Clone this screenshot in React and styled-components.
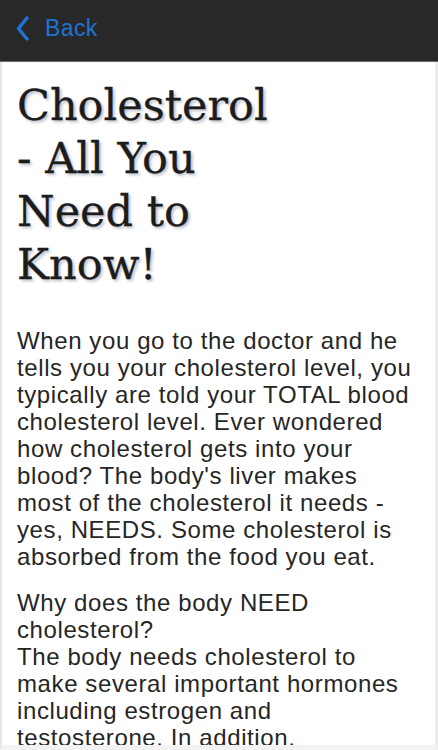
import React from "react";
import styled, { createGlobalStyle } from "styled-components";

const Global = createGlobalStyle`
  html, body { margin: 0; padding: 0; background: #ffffff; }
  body { width: 438px; height: 750px; overflow: hidden; }
  * { box-sizing: border-box; }
`;

const Page = styled.div`
  width: 438px;
  height: 750px;
  display: flex;
  flex-direction: column;
  background: #ffffff;
  overflow: hidden;
`;

const Header = styled.header`
  height: 62px;
  flex: 0 0 62px;
  background: #282828;
  border-bottom: 1px solid #6a6a6a;
  display: flex;
  align-items: center;
  padding-left: 16px;
`;

const BackButton = styled.a`
  display: flex;
  align-items: center;
  gap: 16px;
  color: #1e74d6;
  font-family: "Liberation Sans", Arial, sans-serif;
  font-size: 23px;
  letter-spacing: 0.4px;
  text-decoration: none;
  margin-top: -4px;
  cursor: pointer;
`;

const Chevron = styled.svg`
  width: 13px;
  height: 25px;
  display: block;
`;

const Content = styled.main`
  flex: 1;
  border-left: 2px solid #e6e6e6;
  border-right: 3px solid #ececec;
  border-bottom: 5px solid #f2f2f2;
  padding: 17px 16px 0 15px;
  overflow: hidden;
`;

const Title = styled.h1`
  margin: 0 0 36px 0;
  max-width: 256px;
  font-family: "DejaVu Serif", Georgia, serif;
  font-weight: normal;
  font-size: 43px;
  line-height: 53px;
  color: #1c1c1c;
  -webkit-text-stroke: 0.3px #1c1c1c;
  text-shadow: 2px 2px 3px rgba(90, 100, 125, 0.45);
`;

const Paragraph = styled.p`
  margin: 0 0 19px 0;
  font-family: "Liberation Sans", Arial, sans-serif;
  font-size: 24px;
  line-height: 27px;
  letter-spacing: 0.6px;
  color: #262626;
`;

export default function App() {
  return (
    <>
      <Global />
      <Page>
        <Header>
          <BackButton>
            <Chevron viewBox="0 0 13 25">
              <path
                d="M11 2 L2.5 12.5 L11 23"
                fill="none"
                stroke="#1e74d6"
                strokeWidth="3.4"
                strokeLinecap="round"
                strokeLinejoin="round"
              />
            </Chevron>
            Back
          </BackButton>
        </Header>
        <Content>
          <Title>Cholesterol - All You Need to Know!</Title>
          <Paragraph>
            When you go to the doctor and he tells you your cholesterol level,
            you typically are told your TOTAL blood cholesterol level. Ever
            wondered how cholesterol gets into your blood? The body's liver
            makes most of the cholesterol it needs - yes, NEEDS. Some
            cholesterol is absorbed from the food you eat.
          </Paragraph>
          <Paragraph>
            Why does the body NEED cholesterol?
            <br />
            The body needs cholesterol to make several important hormones
            including estrogen and testosterone. In addition,
          </Paragraph>
        </Content>
      </Page>
    </>
  );
}
